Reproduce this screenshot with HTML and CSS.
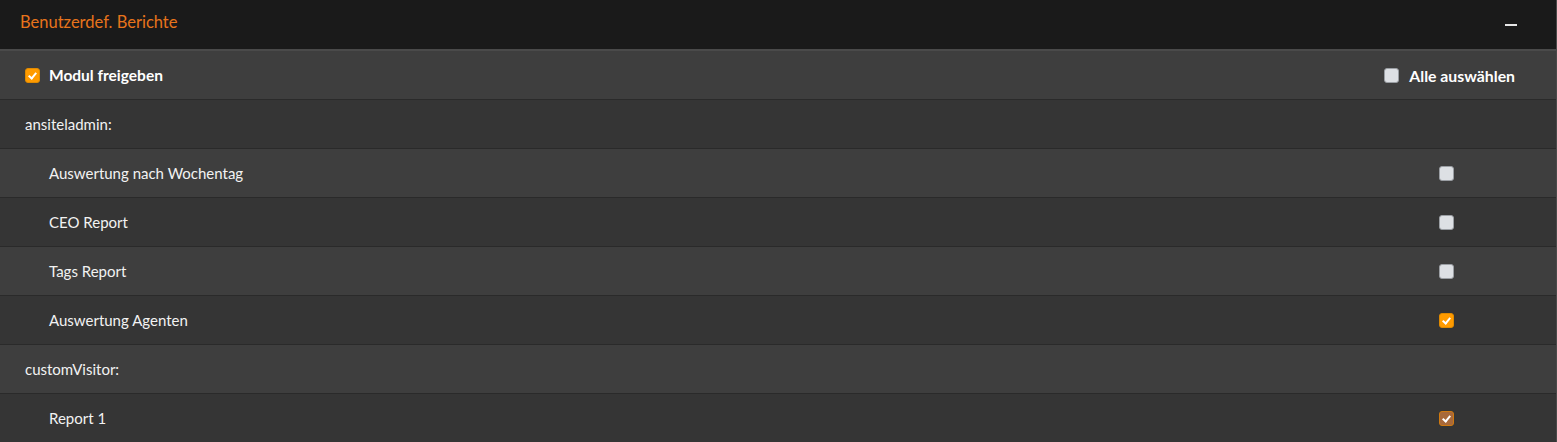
FILE: index.html
```html
<!DOCTYPE html>
<html lang="de">
<head>
<meta charset="utf-8">
<title>Benutzerdef. Berichte</title>
<link rel="stylesheet" href="styles.css">
</head>
<body>
<div class="panel">
  <div class="panel-head">
    <span class="panel-title">Benutzerdef. Berichte</span>
    <span class="minus"></span>
  </div>
  <div class="row light top">
    <label class="chk-label bold"><span class="cb checked"></span>Modul freigeben</label>
    <label class="chk-label bold all"><span class="cb"></span>Alle auswählen</label>
  </div>
  <div class="row dark group">ansiteladmin:</div>
  <div class="row light item"><span>Auswertung nach Wochentag</span><span class="cb"></span></div>
  <div class="row dark item"><span>CEO Report</span><span class="cb"></span></div>
  <div class="row light item"><span>Tags Report</span><span class="cb"></span></div>
  <div class="row dark item"><span>Auswertung Agenten</span><span class="cb checked"></span></div>
  <div class="row light group">customVisitor:</div>
  <div class="row dark item"><span>Report 1</span><span class="cb checked disabled"></span></div>
</div>
</body>
</html>
```
FILE: styles.css
```css
* { box-sizing: border-box; }
html, body { margin: 0; padding: 0; background: #353535; }
body {
  font-family: "Lato", "Open Sans", sans-serif;
  font-size: 15px;
  color: #f2f2f2;
}
.panel { width: 1557px; border-right: 1px solid #4a4a4a; }
.panel-head {
  height: 51px;
  background: #1a1a1a;
  border-bottom: 2px solid #4a4a4a;
  display: flex;
  align-items: center;
  justify-content: space-between;
  padding: 0 39px 5px 20px;
}
.panel-title { color: #e8741c; font-size: 16.5px; }
.minus { width: 12px; height: 2px; background: #e6e6e6; margin-top: 6px; }
.row {
  height: 49px;
  border-bottom: 1px solid #2a2a2a;
  display: flex;
  align-items: center;
}
.light { background: #3e3e3e; }
.dark { background: #353535; }
.top { justify-content: space-between; padding: 0 41px 0 25px; }
.group { padding-left: 25px; }
.item { padding-left: 49px; padding-right: 102px; justify-content: space-between; }
.chk-label { display: flex; align-items: center; gap: 9px; }
.bold { font-weight: 700; font-size: 15.5px; color: #fff; }
.all { font-size: 15.8px; gap: 10px; }
.cb {
  width: 15px; height: 15px;
  border-radius: 3px;
  background: #dde0e4;
  border: 1px solid #9a9ea3;
  position: relative;
  flex: none;
}
.cb.checked { background: #ff9b00; border-color: #e08a00; }
.cb.checked::after {
  content: "";
  position: absolute;
  left: 4px; top: 2px;
  width: 3px; height: 6px;
  border: solid #fff;
  border-width: 0 2px 2px 0;
  transform: rotate(40deg);
}
.cb.disabled { background: #a8693a; border-color: #d07a10; }
```
